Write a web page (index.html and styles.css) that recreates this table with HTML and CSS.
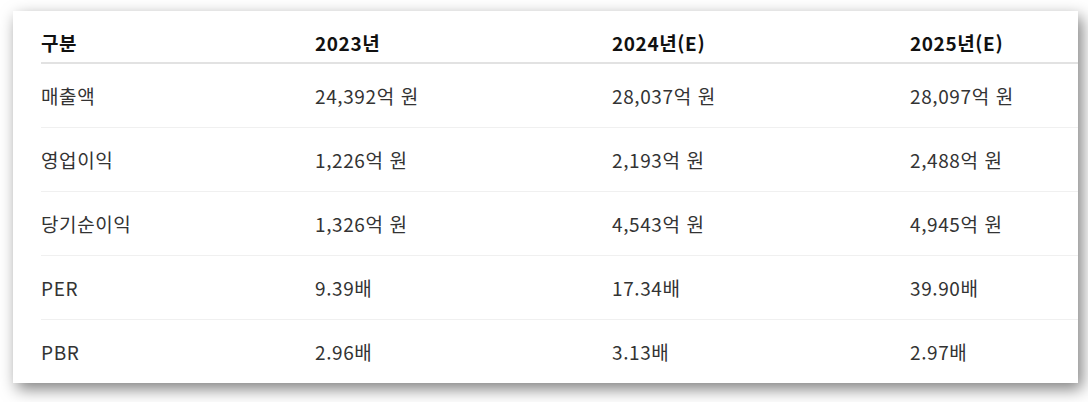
FILE: index.html
```html
<!DOCTYPE html>
<html lang="ko">
<head>
    <meta charset="UTF-8">
    <meta name="viewport" content="width=device-width, initial-scale=1.0">
    <title>실적 전망</title>
    <link rel="stylesheet" href="styles.css">
</head>
<body>
    <div class="card">
        <table class="perf-table">
            <thead>
                <tr>
                    <th>구분</th>
                    <th>2023년</th>
                    <th>2024년(E)</th>
                    <th>2025년(E)</th>
                </tr>
            </thead>
            <tbody>
                <tr>
                    <td>매출액</td>
                    <td>24,392억 원</td>
                    <td>28,037억 원</td>
                    <td>28,097억 원</td>
                </tr>
                <tr>
                    <td>영업이익</td>
                    <td>1,226억 원</td>
                    <td>2,193억 원</td>
                    <td>2,488억 원</td>
                </tr>
                <tr>
                    <td>당기순이익</td>
                    <td>1,326억 원</td>
                    <td>4,543억 원</td>
                    <td>4,945억 원</td>
                </tr>
                <tr>
                    <td>PER</td>
                    <td>9.39배</td>
                    <td>17.34배</td>
                    <td>39.90배</td>
                </tr>
                <tr>
                    <td>PBR</td>
                    <td>2.96배</td>
                    <td>3.13배</td>
                    <td>2.97배</td>
                </tr>
            </tbody>
        </table>
    </div>
</body>
</html>
```

FILE: styles.css
```css
body, html {
    margin: 0;
    padding: 0;
    background-color: #ffffff;
    font-family: "Noto Sans CJK KR", "Noto Sans", sans-serif;
    color: #333;
}

body {
    padding: 11px 10px 19px 13px;
    overflow: hidden;
}

.card {
    width: 1065px;
    height: 372px;
    box-sizing: border-box;
    padding-left: 28px;
    background-color: #fff;
    box-shadow: 4px 6px 15px rgba(0, 0, 0, 0.5);
    overflow: hidden;
}

.perf-table {
    width: 1037px;
    border-collapse: collapse;
    table-layout: fixed;
}

.perf-table th,
.perf-table td {
    text-align: left;
    padding: 0;
    font-size: 19px;
    line-height: 21px;
    letter-spacing: 0.6px;
}

.perf-table th:nth-child(1) { width: 274px; }
.perf-table th:nth-child(2) { width: 297px; }
.perf-table th:nth-child(3) { width: 298px; }

.perf-table th {
    padding: 21px 0 9px;
    font-weight: bold;
    color: #111;
    border-bottom: 2px solid #e2e2e2;
}

.perf-table td {
    padding: 21px 0;
    border-bottom: 1px solid #f0f0f0;
}

.perf-table tbody tr:last-child td {
    border-bottom: none;
}
```
